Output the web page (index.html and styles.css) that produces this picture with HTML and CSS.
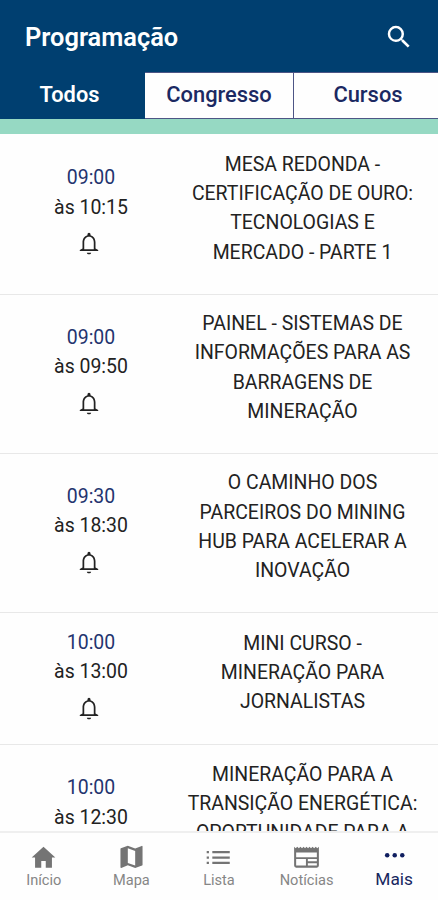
FILE: index.html
```html
<!DOCTYPE html>
<html lang="pt-BR">
<head>
  <meta charset="UTF-8">
  <meta name="viewport" content="width=device-width, initial-scale=1.0">
  <title>Programação</title>
  <link rel="stylesheet" href="styles.css">
</head>
<body>
  <svg class="sprite">
    <symbol id="bell" viewBox="0 0 24 24">
      <path d="M12 22c1.100 0 2-.700 2-1.500h-4c0 .8.9 1.500 2 1.500zm6-5.500V11c0-3.300-1.700-6-4.600-6.700V3.400a1.400 1.400 0 0 0-2.800 0v.9C7.700 5 6 7.700 6 11v5.500l-2.500 1.500v1h17v-1L18 16.500zm-1.600.8H7.600V11c0-2.900 1.600-5.200 4.400-5.200s4.400 2.300 4.400 5.200v6.300z"/>
    </symbol>
  </svg>

  <header class="header">
    <h1>Programação</h1>
    <svg class="search" viewBox="0 0 24 24">
      <path d="M15.500 14h-.79l-.28-.27A6.470 6.470 0 0 0 16 9.500 6.500 6.500 0 1 0 9.500 16c1.610 0 3.090-.59 4.230-1.570l.27.28v.79l5 4.990L20.490 19l-4.990-5zm-6 0C7.010 14 5 11.990 5 9.500S7.010 5 9.500 5 14 7.010 14 9.500 11.990 14 9.500 14z"/>
    </svg>
  </header>

  <nav class="tabs">
    <a class="tab active">Todos</a>
    <a class="tab">Congresso</a>
    <a class="tab">Cursos</a>
  </nav>

  <main class="schedule">
    <div class="event">
      <div class="time">
        <span class="start">09:00</span>
        <span>às 10:15</span>
        <svg class="bell"><use href="#bell"/></svg>
      </div>
      <p class="title">MESA REDONDA -<br>CERTIFICAÇÃO DE OURO:<br>TECNOLOGIAS E<br>MERCADO - PARTE 1</p>
    </div>
    <div class="event">
      <div class="time">
        <span class="start">09:00</span>
        <span>às 09:50</span>
        <svg class="bell"><use href="#bell"/></svg>
      </div>
      <p class="title">PAINEL - SISTEMAS DE<br>INFORMAÇÕES PARA AS<br>BARRAGENS DE<br>MINERAÇÃO</p>
    </div>
    <div class="event">
      <div class="time">
        <span class="start">09:30</span>
        <span>às 18:30</span>
        <svg class="bell"><use href="#bell"/></svg>
      </div>
      <p class="title">O CAMINHO DOS<br>PARCEIROS DO MINING<br>HUB PARA ACELERAR A<br>INOVAÇÃO</p>
    </div>
    <div class="event">
      <div class="time">
        <span class="start">10:00</span>
        <span>às 13:00</span>
        <svg class="bell"><use href="#bell"/></svg>
      </div>
      <p class="title">MINI CURSO -<br>MINERAÇÃO PARA<br>JORNALISTAS</p>
    </div>
    <div class="event last">
      <div class="time">
        <span class="start">10:00</span>
        <span>às 12:30</span>
      </div>
      <p class="title">MINERAÇÃO PARA A<br>TRANSIÇÃO ENERGÉTICA:<br>OPORTUNIDADE PARA A</p>
    </div>
  </main>

  <nav class="bottom-nav">
    <a class="nav-item">
      <svg viewBox="0 0 24 24"><path d="M10 21v-6h4v6h5.500v-9H22.500L12 2.500 1.500 12h3v9z"/></svg>
      <span>Início</span>
    </a>
    <a class="nav-item">
      <svg viewBox="1 1.500 22 22"><path d="M20.500 3l-.16.030L15 5.100 9 3 3.360 4.900c-.21.070-.36.250-.36.480V20.500c0 .28.220.5.5.5l.16-.030L9 18.900l6 2.100 5.640-1.900c.21-.070.36-.25.36-.48V3.500c0-.28-.22-.5-.5-.5zM15 19l-6-2.110V5l6 2.110V19z"/></svg>
      <span>Mapa</span>
    </a>
    <a class="nav-item">
      <svg viewBox="0 0 24 24"><path d="M1.500 6.200h2v2h-2zM6.500 6.200H22v2H6.500zM1.500 11h2v2h-2zM6.500 11H22v2H6.500zM1.500 15.800h2v2h-2zM6.500 15.800H22v2H6.500z"/></svg>
      <span>Lista</span>
    </a>
    <a class="nav-item">
      <svg viewBox="1 0 24 24"><path fill-rule="evenodd" d="M2 2.500l1.400 1.200L4.800 2.500l1.400 1.200L7.600 2.500 9 3.700l1.400-1.200 1.300 1.200L13 2.500l1.400 1.200 1.300-1.200 1.300 1.200 1.400-1.200 1.400 1.200 1.400-1.200 1.400 1.200L24 2.500v16.700a1.800 1.800 0 0 1-1.800 1.800H3.800A1.800 1.800 0 0 1 2 19.200zM3.800 7.500v4.200h18.400V7.500zM3.800 13.400v5.800h8.700v-5.800zM14.200 13.400v2h8v-2zM14.200 17.100v2.100h8v-2.100z"/></svg>
      <span>Notícias</span>
    </a>
    <a class="nav-item active">
      <svg viewBox="0 0 24 24"><circle cx="5.500" cy="10" r="2"/><circle cx="12.200" cy="10" r="2"/><circle cx="18.900" cy="10" r="2"/></svg>
      <span>Mais</span>
    </a>
  </nav>
</body>
</html>
```
FILE: styles.css
```css
* {
  box-sizing: border-box;
}

body {
  margin: 0;
  height: 900px;
  display: flex;
  flex-direction: column;
  overflow: hidden;
  background-color: #fefefe;
  color: #222;
  font-family: Roboto, sans-serif;
}

.sprite {
  display: none;
}

.header {
  display: flex;
  justify-content: space-between;
  align-items: center;
  flex: none;
  height: 72px;
  padding: 2px 24px 0 25px;
  background-color: #003f70;
  color: #fff;
}

h1 {
  margin: 0;
  font-size: 25.4px;
  font-weight: 600;
}

.search {
  width: 30px;
  height: 30px;
  fill: #fff;
}

.tabs {
  display: flex;
  flex: none;
  height: 62px;
  overflow: hidden;
  border-bottom: 15px solid #96d9c3;
}

.tab {
  display: flex;
  justify-content: center;
  align-items: center;
  flex: none;
  width: 149px;
  padding-bottom: 3px;
  border: 1px solid #4d5585;
  border-left: none;
  color: #1b2962;
  font-size: 21.9px;
  font-weight: 500;
}

.tab.active {
  width: 145px;
  padding-right: 5px;
  background-color: #003f70;
  border-color: #003f70;
  color: #fff;
  font-size: 21.8px;
  font-weight: 600;
}

.schedule {
  flex: 1;
  min-height: 0;
  padding-top: 1.4px;
  overflow: hidden;
}

.event {
  display: flex;
  align-items: center;
  padding: 14.5px 0 26.75px;
  border-bottom: 1px solid #e8e8e8;
  font-size: 19.45px;
  line-height: 29.25px;
}

.event.last {
  align-items: flex-start;
}

.time {
  display: flex;
  flex-direction: column;
  align-items: center;
  width: 182px;
  height: 90px;
}

.last .time {
  padding-top: 13.5px;
}

.start {
  color: #24346f;
}

.bell {
  width: 26px;
  height: 27px;
  margin: 8.5px 4px 0 0;
  flex: none;
  fill: #222;
}

.title {
  width: 241px;
  margin: 0;
  text-align: center;
  white-space: nowrap;
}

.bottom-nav {
  display: flex;
  flex: none;
  height: 69px;
  padding-top: 11px;
  border-top: 2px solid #efefef;
  background-color: #fefefe;
}

.nav-item {
  display: flex;
  flex-direction: column;
  align-items: center;
  flex: 1;
  color: #868686;
  font-size: 14.6px;
  line-height: 18px;
}

.nav-item svg {
  width: 27px;
  height: 27px;
  fill: #747474;
}

.nav-item.active {
  color: #17275f;
  font-size: 17.3px;
  line-height: 17px;
}

.nav-item.active svg {
  fill: #101f60;
}
```
